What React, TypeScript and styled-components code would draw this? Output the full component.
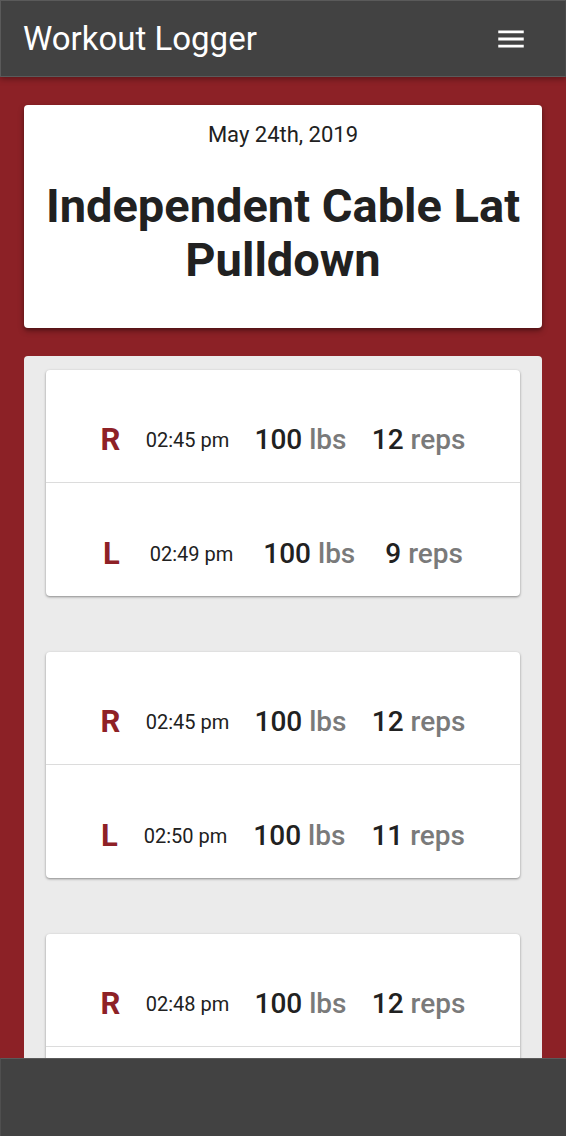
import React from "react";
import styled, { createGlobalStyle } from "styled-components";

const GlobalStyle = createGlobalStyle`
  html, body {
    margin: 0;
    padding: 0;
    background: #8c2126;
    font-family: Roboto, "Noto Sans", "Liberation Sans", sans-serif;
    -webkit-font-smoothing: antialiased;
  }
  * { box-sizing: border-box; }
`;

const Page = styled.div`
  min-height: 100vh;
  background: #8c2126;
  display: flex;
  flex-direction: column;
`;

const TopBar = styled.header`
  height: 77px;
  background: #424242;
  border: 1px solid #5a5a5a;
  border-right-color: #4a4a4a;
  display: flex;
  align-items: center;
  justify-content: space-between;
  padding: 0 37px 0 22px;
  box-shadow: 0 2px 6px rgba(0, 0, 0, 0.35);
  position: relative;
  z-index: 2;
`;

const AppTitle = styled.h1`
  margin: 0;
  font-size: 33px;
  font-weight: 400;
  color: #ffffff;
  letter-spacing: 0;
`;

const MenuButton = styled.button`
  width: 34px;
  height: 34px;
  padding: 0;
  border: none;
  background: transparent;
  display: flex;
  align-items: center;
  justify-content: center;
  cursor: pointer;
`;

const Main = styled.main`
  padding: 28px 24px 120px;
  display: flex;
  flex-direction: column;
  gap: 28px;
`;

const ExerciseCard = styled.section`
  background: #ffffff;
  border-radius: 4px;
  box-shadow: 0 3px 6px rgba(0, 0, 0, 0.3), 0 2px 3px rgba(0, 0, 0, 0.2);
  padding: 16px 12px 41px;
  text-align: center;
  color: #212121;
`;

const DateText = styled.div`
  font-size: 22px;
  line-height: 28px;
  font-weight: 400;
`;

const ExerciseName = styled.h2`
  margin: 30px 0 0;
  font-size: 47px;
  line-height: 54px;
  font-weight: 700;
`;

const SetPanel = styled.section`
  background: #ebebeb;
  border-radius: 4px;
  padding: 14px 22px 40px;
  display: flex;
  flex-direction: column;
  gap: 56px;
`;

const SetCard = styled.div`
  background: #ffffff;
  border-radius: 4px;
  box-shadow: 0 1px 3px rgba(0, 0, 0, 0.25), 0 1px 2px rgba(0, 0, 0, 0.2);
  overflow: hidden;
`;

const SetRow = styled.div`
  height: 112px;
  padding: 50px 42px 22px;
  display: flex;
  align-items: center;
  justify-content: space-around;
  & + & {
    border-top: 1px solid #dcdcdc;
    height: 114px;
  }
`;

const Side = styled.span`
  font-size: 31px;
  font-weight: 700;
  color: #8e2126;
  line-height: 40px;
`;

const Time = styled.span`
  font-size: 20px;
  font-weight: 400;
  color: #212121;
  line-height: 40px;
`;

const Measure = styled.span`
  font-size: 28px;
  font-weight: 500;
  color: #212121;
  line-height: 40px;
  white-space: nowrap;
`;

const Unit = styled.span`
  color: #7a7a7a;
`;

const BottomBar = styled.footer`
  position: fixed;
  left: 0;
  right: 0;
  bottom: 0;
  height: 78px;
  background: #424242;
  border-top: 1px solid #5a5a5a;
  border-left: 1px solid #4f4f4f;
  z-index: 3;
`;

type SetEntry = { side: "R" | "L"; time: string; weight: number; reps: number };

const sets: SetEntry[][] = [
  [
    { side: "R", time: "02:45 pm", weight: 100, reps: 12 },
    { side: "L", time: "02:49 pm", weight: 100, reps: 9 },
  ],
  [
    { side: "R", time: "02:45 pm", weight: 100, reps: 12 },
    { side: "L", time: "02:50 pm", weight: 100, reps: 11 },
  ],
  [
    { side: "R", time: "02:48 pm", weight: 100, reps: 12 },
    { side: "L", time: "02:52 pm", weight: 100, reps: 10 },
  ],
];

const MenuIcon = () => (
  <svg width="34" height="34" viewBox="0 0 24 24" aria-hidden="true">
    <path fill="#ffffff" d="M3 18h18v-2H3v2zm0-5h18v-2H3v2zm0-7v2h18V6H3z" />
  </svg>
);

export default function App() {
  return (
    <Page>
      <GlobalStyle />
      <TopBar>
        <AppTitle>Workout Logger</AppTitle>
        <MenuButton aria-label="Menu">
          <MenuIcon />
        </MenuButton>
      </TopBar>
      <Main>
        <ExerciseCard>
          <DateText>May 24th, 2019</DateText>
          <ExerciseName>Independent Cable Lat Pulldown</ExerciseName>
        </ExerciseCard>
        <SetPanel>
          {sets.map((group, i) => (
            <SetCard key={i}>
              {group.map((s, j) => (
                <SetRow key={j}>
                  <Side>{s.side}</Side>
                  <Time>{s.time}</Time>
                  <Measure>
                    {s.weight} <Unit>lbs</Unit>
                  </Measure>
                  <Measure>
                    {s.reps} <Unit>reps</Unit>
                  </Measure>
                </SetRow>
              ))}
            </SetCard>
          ))}
        </SetPanel>
      </Main>
      <BottomBar />
    </Page>
  );
}
